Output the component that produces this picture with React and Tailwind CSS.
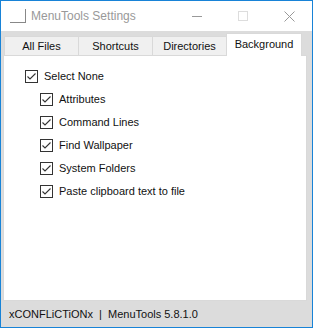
import React from 'react';

const font = { fontFamily: '"Liberation Sans", Arial, sans-serif' };

const Check = ({ label }) => (
    <div className="flex items-center h-[23px]">
        <div className="w-[13px] h-[13px] border border-[#333] bg-white flex items-center justify-center">
            <svg width="11" height="11" viewBox="0 0 11 11">
                <path d="M1.5 5.5 L4 8 L9.5 2.5" fill="none" stroke="#333" strokeWidth="1.1" />
            </svg>
        </div>
        <span className="ml-[6px] text-[11px] text-[#111]">{label}</span>
    </div>
);

const App = () => {
    const tabs = ['All Files', 'Shortcuts', 'Directories'];
    return (
        <div style={font} className="w-[313px] h-[328px] border border-[#1883d7] bg-[#dcdcdc] flex flex-col">
            {/* Title bar */}
            <div className="h-[30px] bg-white flex items-center relative">
                <div className="ml-[9px] w-[16px] h-[14px] border-r border-b border-[#888]" />
                <span className="ml-[5px] text-[12px] text-[#999]">MenuTools Settings</span>
                <div className="ml-auto flex items-center">
                    <div className="w-[46px] flex justify-center">
                        <div className="w-[10px] h-px bg-[#999]" />
                    </div>
                    <div className="w-[46px] flex justify-center">
                        <div className="w-[10px] h-[10px] border border-[#ddd]" />
                    </div>
                    <div className="w-[46px] flex justify-center">
                        <svg width="11" height="11" viewBox="0 0 11 11">
                            <path d="M0.5 0.5 L10.5 10.5 M10.5 0.5 L0.5 10.5" stroke="#999" strokeWidth="1" />
                        </svg>
                    </div>
                </div>
            </div>

            {/* Tabs */}
            <div className="flex items-end pl-[3px] mt-[2px] h-[23px]">
                {tabs.map((t) => (
                    <div key={t} className="w-[75px] h-[20px] bg-[#f0f0f0] border border-[#d9d9d9] border-b-0 -mr-px flex items-center justify-center text-[11px] text-[#111]">
                        {t}
                    </div>
                ))}
                <div className="w-[76px] h-[23px] bg-white border border-[#d9d9d9] border-b-0 flex items-center justify-center text-[11px] text-[#111] pb-[2px] relative z-10">
                    Background
                </div>
            </div>

            {/* Panel */}
            <div className="mx-[2px] mr-[5px] h-[246px] bg-white border border-[#d9d9d9] -mt-px pt-[9px]">
                <div className="pl-[21px]">
                    <Check label="Select None" />
                    <div className="pl-[15px]">
                        {['Attributes', 'Command Lines', 'Find Wallpaper', 'System Folders', 'Paste clipboard text to file'].map((l) => (
                            <Check key={l} label={l} />
                        ))}
                    </div>
                </div>
            </div>

            {/* Status */}
            <div className="flex-1 flex items-center pl-[8px] text-[11px] text-[#111]">
                xCONFLiCTiONx&nbsp; |&nbsp; MenuTools 5.8.1.0
            </div>
        </div>
    );
};

export default App;
